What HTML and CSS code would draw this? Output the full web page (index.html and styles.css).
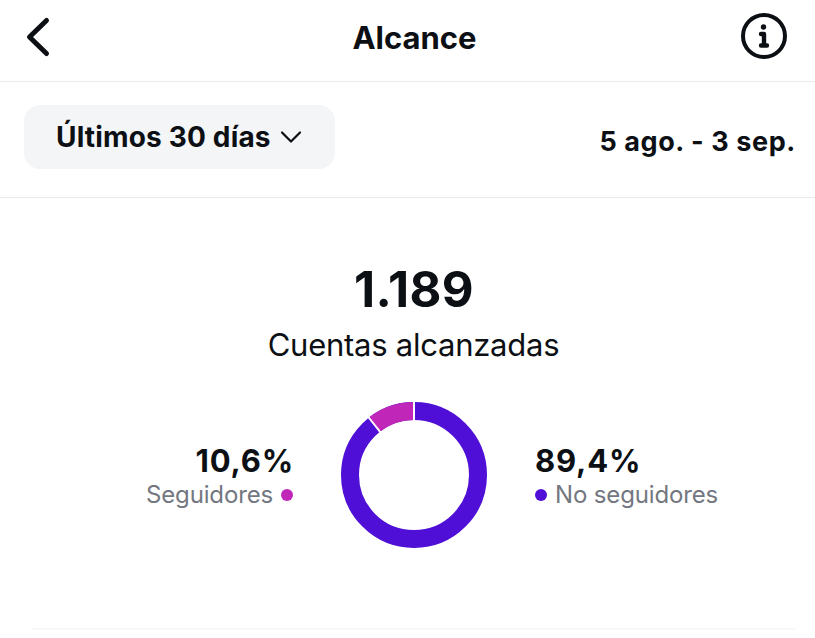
FILE: index.html
```
<!DOCTYPE html>
<html lang="es">
<head>
    <meta charset="UTF-8">
    <meta name="viewport" content="width=device-width, initial-scale=1.0">
    <title>Alcance</title>
    <link rel="stylesheet" href="styles.css">
</head>
<body>
    <header class="top-bar">
        <a href="#" class="back-btn" aria-label="Volver">
            <svg width="28" height="42" viewBox="0 0 28 42">
                <path d="M22.500 4.500 5.500 21l17 16.500" />
            </svg>
        </a>
        <h1>Alcance</h1>
        <a href="#" class="info-btn" aria-label="Información">
            <svg width="48" height="48" viewBox="0 0 48 48">
                <circle cx="24" cy="24" r="21" />
                <path class="stem" d="M21 22h3v11.500M21 33.500h6" />
                <circle class="dot" cx="23.500" cy="15" r="2.700" />
            </svg>
        </a>
    </header>

    <!-- Filtro de fechas -->
    <section class="filter-bar">
        <button class="period-btn">
            <span>Últimos 30 días</span>
            <svg width="22" height="14" viewBox="0 0 22 14">
                <path d="M2 2.500 11 11.500l9-9" />
            </svg>
        </button>
        <span class="date-range">5 ago. - 3 sep.</span>
    </section>

    <main class="reach">
        <div class="total">1.189</div>
        <div class="total-label">Cuentas alcanzadas</div>

        <div class="breakdown">
            <div class="group followers">
                <div class="percent">10,6%</div>
                <div class="group-label">Seguidores <span class="bullet"></span></div>
            </div>
            <svg class="donut" width="146" height="146" viewBox="0 0 146 146">
                <circle class="ring" cx="73" cy="73" r="64" />
                <circle class="slice" cx="73" cy="73" r="64" pathLength="100" />
                <path class="gap" d="M73 0v20M27.300 15l13 16.400" />
            </svg>
            <div class="group non-followers">
                <div class="percent">89,4%</div>
                <div class="group-label"><span class="bullet"></span> No seguidores</div>
            </div>
        </div>
    </main>
</body>
</html>
```

FILE: styles.css
```
* {
    box-sizing: border-box;
}

body {
    margin: 0;
    height: 638px;
    overflow: hidden;
    font-family: Inter, sans-serif;
    background-color: #ffffff;
    color: #0c1014;
}

svg {
    display: block;
    fill: none;
    stroke: #0c1014;
}

.top-bar {
    display: grid;
    grid-template-columns: 60px 1fr 48px;
    align-items: center;
    height: 82px;
    padding: 0 27px 9px 13px;
    border-bottom: 1px solid #e9eaec;
}

.back-btn svg {
    margin: 2px 0 0 11px;
    stroke-width: 5;
    stroke-linecap: round;
    stroke-linejoin: round;
}

.info-btn svg {
    stroke-width: 4;
}

.info-btn .stem {
    stroke-width: 4.400;
    stroke-linecap: round;
    stroke-linejoin: round;
}

.info-btn .dot {
    fill: #0c1014;
    stroke: none;
}

h1 {
    margin: 4px 0 0 16px;
    font-size: 31px;
    line-height: 40px;
    font-weight: 650;
    letter-spacing: 0;
    text-align: center;
}

.filter-bar {
    display: flex;
    justify-content: space-between;
    align-items: flex-start;
    height: 116px;
    padding: 23px 19px 0 24px;
    border-bottom: 1px solid #e9eaec;
}

.period-btn {
    display: flex;
    align-items: center;
    gap: 9px;
    width: 311px;
    height: 64px;
    padding: 0 0 0 32px;
    border: none;
    border-radius: 16px;
    background-color: #f3f5f7;
    color: #0c1014;
    font-family: inherit;
    font-size: 28px;
    font-weight: 650;
    letter-spacing: 0.17px;
    white-space: nowrap;
}

.period-btn svg {
    stroke-width: 2.200;
    stroke-linecap: round;
    stroke-linejoin: round;
}

.date-range {
    margin-top: 20px;
    font-size: 27px;
    line-height: 34px;
    font-weight: 650;
    letter-spacing: 0.6px;
    white-space: nowrap;
}

.reach {
    height: 432px;
    margin: 0 20px 0 32px;
    padding-top: 62px;
    border-bottom: 2px solid #f8f8f8;
}

.total {
    margin-left: 1px;
    font-size: 49px;
    line-height: 60px;
    font-weight: 700;
    letter-spacing: 0.4px;
    text-align: center;
}

.total-label {
    margin-top: 5px;
    font-size: 31px;
    line-height: 40px;
    letter-spacing: -0.25px;
    text-align: center;
}

.breakdown {
    display: grid;
    grid-template-columns: 261px 146px 1fr;
    column-gap: 48px;
    align-items: start;
    margin-top: 37px;
}

.followers {
    text-align: right;
}

.group {
    padding-top: 39px;
}

.percent {
    margin-right: -1px;
    font-size: 31px;
    line-height: 40px;
    font-weight: 650;
    letter-spacing: 0.8px;
}

.group-label {
    display: flex;
    align-items: center;
    gap: 8px;
    font-size: 24px;
    line-height: 28px;
    letter-spacing: -0.15px;
    color: #737780;
    white-space: nowrap;
}

.followers .group-label {
    justify-content: flex-end;
}

.bullet {
    width: 12px;
    height: 12px;
    border-radius: 50%;
    background-color: #4f0fd6;
}

.followers .bullet {
    background-color: #c026b8;
}

.ring,
.slice {
    stroke: #4f0fd6;
    stroke-width: 18;
}

.slice {
    stroke: #c026b8;
    stroke-dasharray: 10.6 89.4;
    stroke-dashoffset: 35.6;
}

.gap {
    stroke: #ffffff;
    stroke-width: 2;
}
```
